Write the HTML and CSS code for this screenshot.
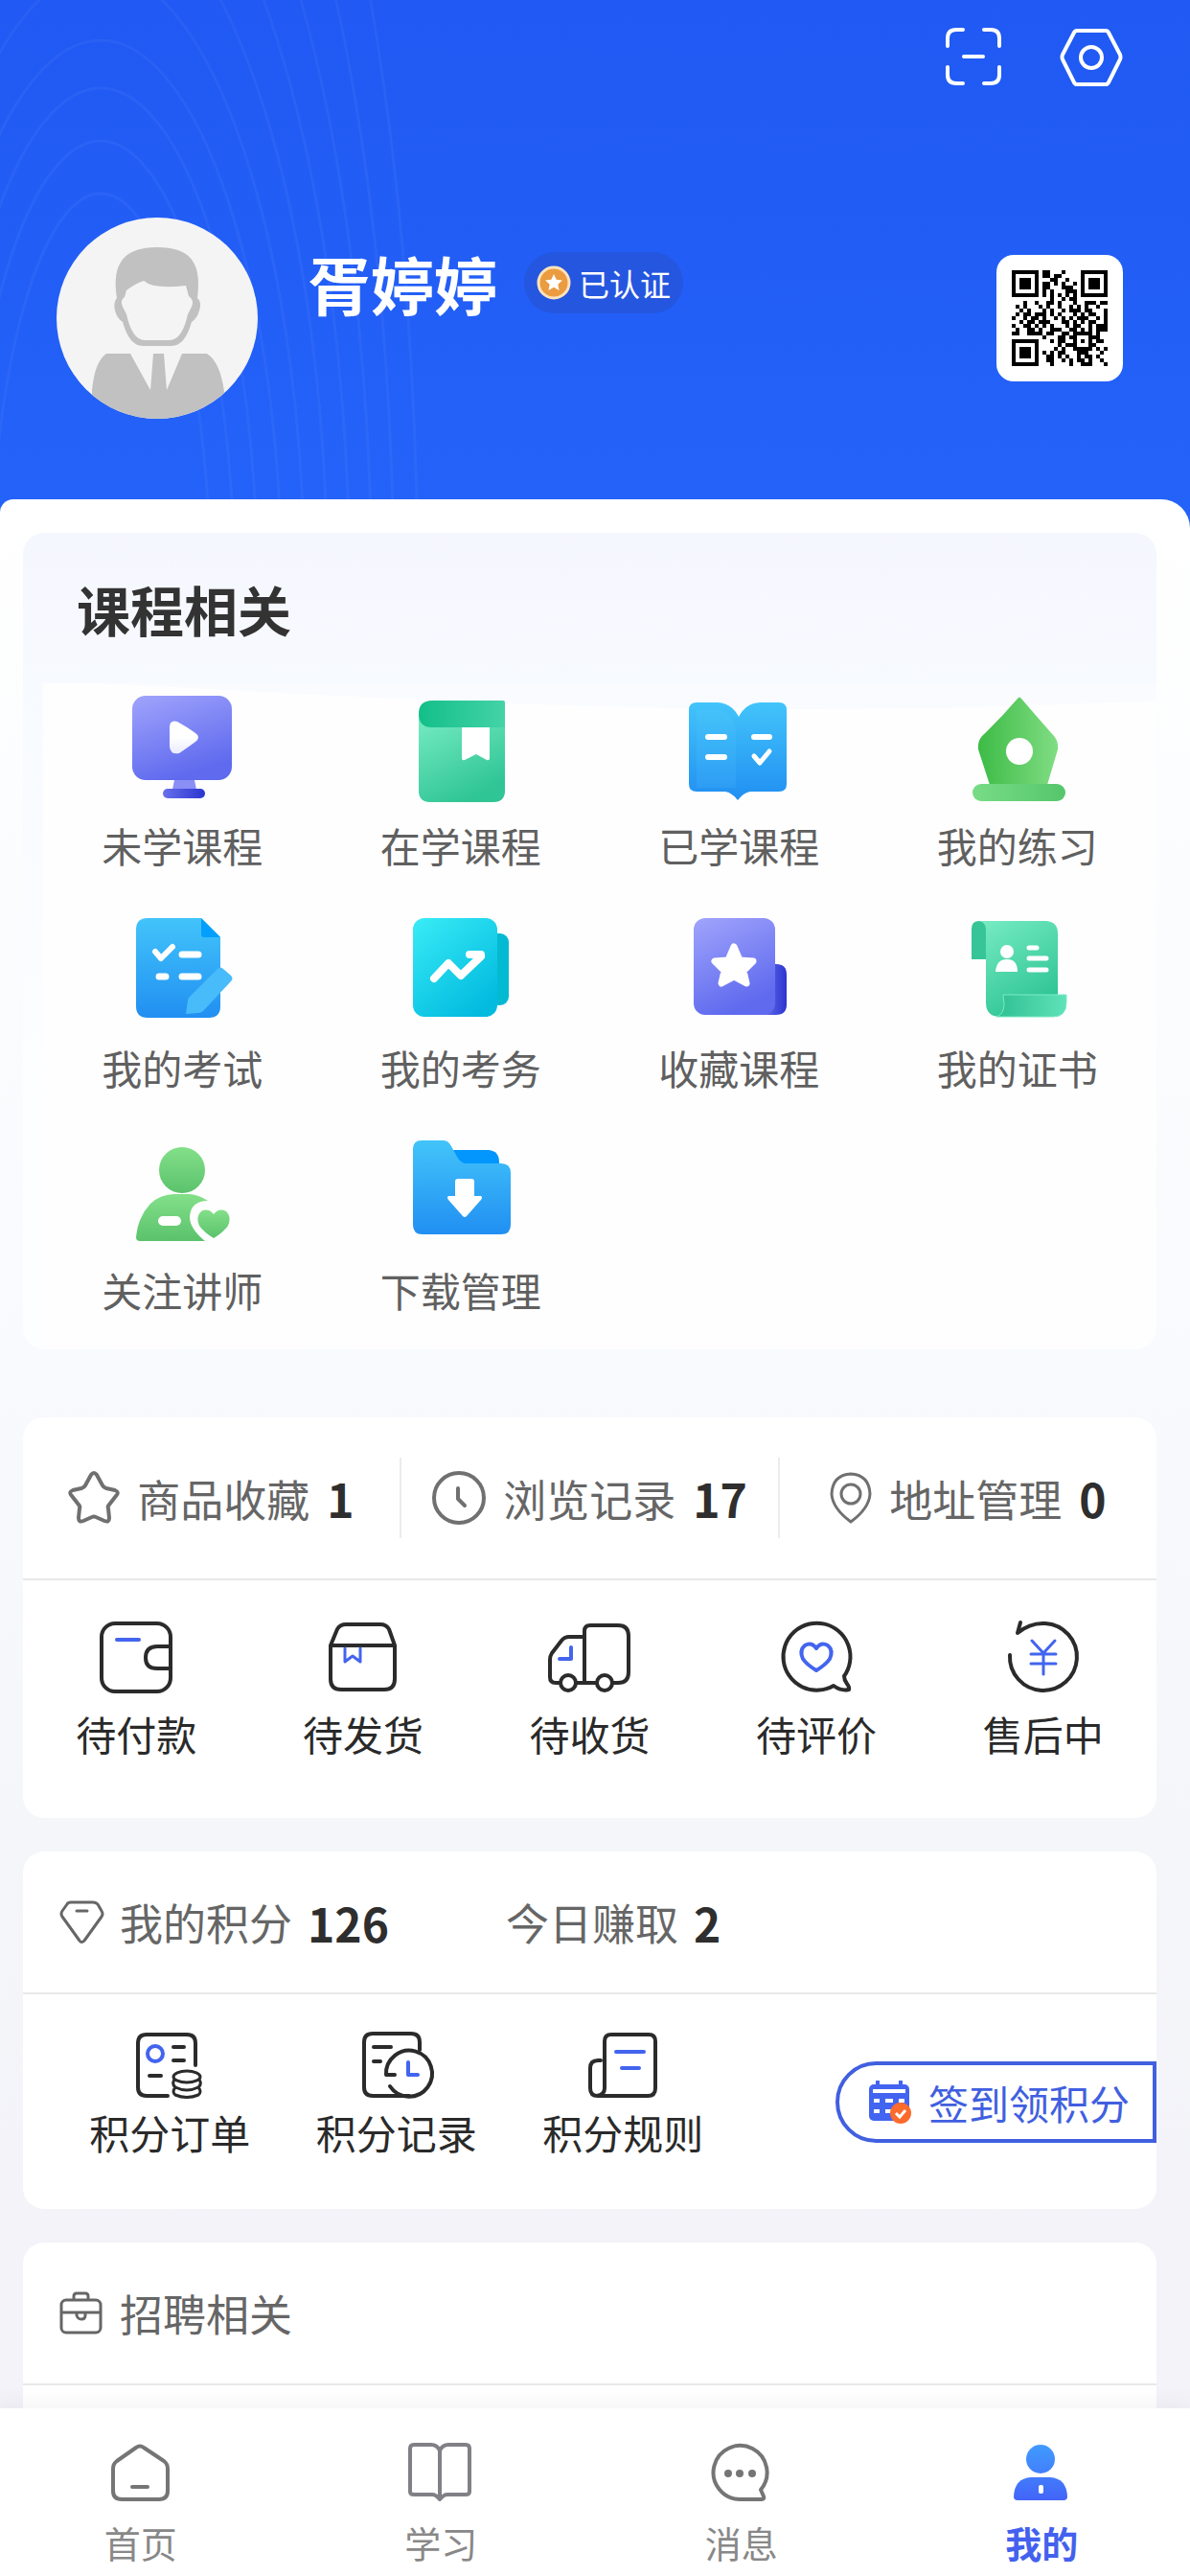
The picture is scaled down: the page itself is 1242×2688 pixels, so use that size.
FILE: index.html
```
<!DOCTYPE html>
<html lang="zh-CN">

<head>
    <meta charset="UTF-8">
    <meta name="viewport" content="width=device-width, initial-scale=1.0">
    <title>我的</title>
    <link rel="stylesheet" href="styles.css">
</head>

<body>

    <div class="page">
        <header class="header">
            <!-- faint rings behind the profile -->
            <svg class="rings" viewBox="0 0 600 551" fill="none" stroke="#fff" stroke-opacity=".045" stroke-width="3">
                <ellipse cx="105" cy="620" rx="115" ry="418" />
                <ellipse cx="105" cy="620" rx="140" ry="473" />
                <ellipse cx="105" cy="620" rx="164" ry="528" />
                <ellipse cx="105" cy="620" rx="189" ry="578" />
                <ellipse cx="105" cy="620" rx="213" ry="650" />
                <ellipse cx="105" cy="620" rx="237" ry="730" />
                <ellipse cx="105" cy="620" rx="260" ry="820" />
                <ellipse cx="105" cy="620" rx="283" ry="920" />
                <ellipse cx="105" cy="620" rx="306" ry="1040" />
                <ellipse cx="105" cy="620" rx="331" ry="1180" />
            </svg>

            <div class="tools">
                <button class="tool" type="button" aria-label="扫一扫">
                    <svg width="60" height="62" viewBox="0 0 60 62" fill="none" stroke="#fff" stroke-width="4" stroke-linecap="round">
                        <path d="M3 20V12Q3 3 12 3H19M41 3H48Q57 3 57 12V20M57 42V50Q57 59 48 59H41M19 59H12Q3 59 3 50V42M20 31H40" />
                    </svg>
                </button>
                <button class="tool" type="button" aria-label="设置">
                    <svg width="66" height="62" viewBox="0 0 66 62" fill="none" stroke="#fff" stroke-width="4" stroke-linejoin="round">
                        <path d="M18 4H48Q50 4 51 6L63 29Q64 32 63 34L51 58Q50 60 48 60H18Q16 60 15 58L3 34Q2 32 3 29L15 6Q16 4 18 4Z" />
                        <circle cx="33" cy="32" r="11" />
                    </svg>
                </button>
            </div>

            <div class="profile">
                <svg class="avatar" viewBox="0 0 210 210">
                    <defs><clipPath id="face"><circle cx="105" cy="105" r="105" /></clipPath></defs>
                    <g clip-path="url(#face)">
                        <rect width="210" height="210" fill="#f4f4f4" />
                        <path d="M63 84C57 46 72 31 105 31C139 31 152 46 147 84Q152 88 149 97Q147 105 141 109Q134 134 120 134H90Q76 134 69 109Q63 105 61 97Q59 88 63 84Z" fill="#c1c1c1" />
                        <path d="M73 76Q82 69 91 66Q101 75 135 71L138 82Q144 86 141 93L137 101Q131 128 118 128H92Q79 128 73 101L69 93Q66 86 71 83Z" fill="#f4f4f4" />
                        <path d="M37 210V180Q40 150 52 142H77L98 180L101 142H112L115 180L131 142H157Q171 151 175 182V210Z" fill="#c1c1c1" />
                    </g>
                </svg>
                <div class="who">
                    <h1 class="name">胥婷婷</h1>
                    <span class="badge">
                        <svg width="36" height="36" viewBox="0 0 36 36">
                            <circle cx="18" cy="18" r="16" fill="#eb9b40" stroke="#fde3bb" stroke-width="3" />
                            <path d="M18 9L20.700 14.800L27 15.500L22.300 19.800L23.600 26L18 22.800L12.400 26L13.700 19.800L9 15.500L15.300 14.800Z" fill="#fff" />
                        </svg>
                        已认证
                    </span>
                </div>
                <button class="qr" type="button" aria-label="二维码">
                    <svg width="100" height="100" viewBox="0 0 25 25" fill="none" stroke="#000">
                        <path d="M.5 .5H6.500V6.500H.5ZM18.500 .5H24.500V6.500H18.500ZM.5 18.500H6.500V24.500H.5Z" />
                        <path d="M2 3.500H5M20 3.500H23M2 21.500H5" stroke-width="3" />
                        <path d="M8 .5h2M13 .5h1M8 1.500h2M11 1.500h2M10 2.500h2M14 2.500h1M8 3.500h2M11 3.500h1M13 3.500h1M16 3.500h1M8 4.500h2M13 4.500h3M8 5.500h1M10 5.500h1M14 5.500h3M8 6.500h1M10 6.500h1M12 6.500h1M14 6.500h1M16 6.500h1M10 7.500h1M13 7.500h1M15 7.500h2" />
                        <path d="M3 8.500h1M6 8.500h1M9 8.500h2M12 8.500h1M16 8.500h1M19 8.500h3M23 8.500h2M1 9.500h1M3 9.500h1M7 9.500h1M9 9.500h1M12 9.500h1M15 9.500h1M17 9.500h1M19 9.500h1M22 9.500h1M2 10.500h1M4 10.500h1M8 10.500h1M10 10.500h1M13 10.500h1M15 10.500h3M19 10.500h2M24 10.500h1M1 11.500h1M3 11.500h2M6 11.500h3M10 11.500h1M12 11.500h1M16 11.500h1M18 11.500h1M20 11.500h2M24 11.500h1" />
                        <path d="M0 12.500h1M3 12.500h1M5 12.500h2M8 12.500h1M11 12.500h1M13 12.500h1M15 12.500h1M17 12.500h3M22 12.500h1M24 12.500h1M2 13.500h1M4 13.500h2M7 13.500h3M13 13.500h2M16 13.500h1M18 13.500h1M20 13.500h2M24 13.500h1M0 14.500h1M3 14.500h2M6 14.500h1M8 14.500h1M10 14.500h1M14 14.500h1M16 14.500h2M20 14.500h1M22 14.500h3M1 15.500h1M4 15.500h2M7 15.500h1M10 15.500h3M15 15.500h2M18 15.500h1M20 15.500h1M22 15.500h3M0 16.500h2M4 16.500h4M9 16.500h2M13 16.500h2M16 16.500h5M22 16.500h1" />
                        <path d="M8 17.500h1M12 17.500h2M15 17.500h2M20 17.500h3M10 18.500h1M12 18.500h2M16 18.500h1M18 18.500h1M20 18.500h1M22 18.500h2M12 19.500h1M14 19.500h3M20 19.500h2M11 20.500h1M13 20.500h1M16 20.500h5M22 20.500h1M24 20.500h1M8 21.500h1M10 21.500h1M12 21.500h2M17 21.500h3M23 21.500h1M9 22.500h2M12 22.500h1M14 22.500h1M17 22.500h1M19 22.500h2M22 22.500h1M9 23.500h2M13 23.500h1M15 23.500h1M17 23.500h2M20 23.500h1M23 23.500h1M10 24.500h1M15 24.500h1M18 24.500h3M24 24.500h1" />
                    </svg>
                </button>
            </div>
        </header>

        <main class="sheet">

            <section class="card courses">
                <h2 class="card-title">课程相关</h2>
                <div class="grid">
                    <svg class="curve" viewBox="0 0 1162 28" preserveAspectRatio="none">
                        <path d="M0 0H60C300 12 520 27 800 27C960 27 1060 22 1162 18V0Z" fill="#f9fbff" />
                    </svg>
                    <a class="course" href="#">
                        <svg class="course-icon" viewBox="0 0 120 120">
                            <defs>
                                <linearGradient id="violet" x1="0" y1="0" x2=".4" y2="1"><stop offset="0" stop-color="#a0a4fc" /><stop offset="1" stop-color="#5f6aee" /></linearGradient>
                                <linearGradient id="indigo"><stop offset="0" stop-color="#6870ec" /><stop offset="1" stop-color="#2b35cf" /></linearGradient>
                                <linearGradient id="shine" x1="0" y1="0" x2="0" y2="1"><stop offset=".5" stop-color="#fff" /><stop offset="1" stop-color="#e9ebff" /></linearGradient>
                                <linearGradient id="mint" x1="0" y1="0" x2=".5" y2="1"><stop offset="0" stop-color="#78ecc4" /><stop offset="1" stop-color="#30c595" /></linearGradient>
                                <linearGradient id="mintdark"><stop offset="0" stop-color="#13bf88" /><stop offset="1" stop-color="#44d3a6" /></linearGradient>
                                <linearGradient id="flap"><stop offset="0" stop-color="#2fc092" /><stop offset="1" stop-color="#5fe2b8" /></linearGradient>
                                <linearGradient id="sky" x1="0" y1="0" x2="0" y2="1"><stop offset="0" stop-color="#42c4fa" /><stop offset="1" stop-color="#218ff2" /></linearGradient>
                                <linearGradient id="leaf"><stop offset="0" stop-color="#3dbb46" /><stop offset="1" stop-color="#80dd83" /></linearGradient>
                                <linearGradient id="leafbar"><stop offset="0" stop-color="#78dc86" /><stop offset="1" stop-color="#55c66c" /></linearGradient>
                                <linearGradient id="leafdown" x1="0" y1="0" x2="0" y2="1"><stop offset="0" stop-color="#83e089" /><stop offset="1" stop-color="#5bc26c" /></linearGradient>
                                <linearGradient id="cyan" x1="0" y1="0" x2=".7" y2="1"><stop offset="0" stop-color="#39ecf6" /><stop offset="1" stop-color="#02bbdf" /></linearGradient>
                            </defs>
                            <rect x="8" y="4" width="104" height="88" rx="14" fill="url(#violet)" />
                            <path d="M52 92H73L75 102H50Z" fill="#8a8ff5" />
                            <rect x="40" y="101" width="44" height="10" rx="5" fill="url(#indigo)" />
                            <path d="M47 37Q47 29 55 31Q66 37 74 43Q80 47 74 52Q66 58 57 64Q48 66 47 57Z" fill="url(#shine)" />
                        </svg>
                        <span>未学课程</span>
                    </a>
                    <a class="course" href="#">
                        <svg class="course-icon" viewBox="0 0 120 120">
                            <path d="M16 24H106V103Q106 115 94 115H28Q16 115 16 103Z" fill="url(#mint)" />
                            <path d="M30 9H104Q106 9 106 11V37H30Q16 37 16 23Q16 9 30 9Z" fill="url(#mintdark)" />
                            <path d="M61 37H90V69Q90 72 87 71L76 65L64 71Q61 72 61 69Z" fill="#fff" />
                        </svg>
                        <span>在学课程</span>
                    </a>
                    <a class="course" href="#">
                        <svg class="course-icon" viewBox="0 0 120 120">
                            <path d="M16 11H38Q53 12 60 26Q67 12 82 11H102Q110 11 110 19V96Q110 104 102 104H72Q65 105 59 113Q53 105 46 104H16Q8 104 8 96V19Q8 11 16 11Z" fill="url(#sky)" />
                            <path d="M16 19H38Q56 21 57 43V100H16Z" fill="#6fd3ff" opacity=".12" />
                            <path d="M28 47H45M28 68H45M76 47H92" stroke="#fff" stroke-width="6" stroke-linecap="round" />
                            <path d="M76 67L82 74L92 62" fill="none" stroke="#fff" stroke-width="5" stroke-linecap="round" stroke-linejoin="round" />
                        </svg>
                        <span>已学课程</span>
                    </a>
                    <a class="course" href="#">
                        <svg class="course-icon" viewBox="0 0 120 120">
                            <path d="M60 7Q62 4 64 7Q82 28 98 46Q103 52 102 60L91 97H31L19 60Q18 52 23 46Q42 28 60 7Z" fill="url(#leaf)" />
                            <rect x="13" y="96" width="97" height="18" rx="9" fill="url(#leafbar)" />
                            <circle cx="62" cy="62" r="14" fill="#fff" />
                        </svg>
                        <span>我的练习</span>
                    </a>

                    <a class="course" href="#">
                        <svg class="course-icon" viewBox="0 0 120 120">
                            <path d="M24 4H80L100 24V96Q100 108 88 108H24Q12 108 12 96V16Q12 4 24 4Z" fill="url(#sky)" />
                            <path d="M80 4L100 24H83Q80 24 80 21Z" fill="#049ffc" />
                            <path d="M60 42H77M60 65H77M36 65H43" stroke="#fff" stroke-width="7" stroke-linecap="round" />
                            <path d="M32 39L38 46L50 34" fill="none" stroke="#fff" stroke-width="6" stroke-linecap="round" stroke-linejoin="round" />
                            <path d="M97 57Q100 54 103 57L111 64Q114 67 111 70L82 101Q80 103 77 103L64 104L66 90Q66 88 68 86Z" fill="#48bbfb" />
                        </svg>
                        <span>我的考试</span>
                    </a>
                    <a class="course" href="#">
                        <svg class="course-icon" viewBox="0 0 120 120">
                            <rect x="70" y="20" width="40" height="75" rx="9" fill="#04b9d2" />
                            <rect x="10" y="4" width="88" height="103" rx="12" fill="url(#cyan)" />
                            <path d="M32 67L47 51L60 64L81 44M69 42H81" fill="none" stroke="#fff" stroke-width="8" stroke-linecap="round" stroke-linejoin="round" />
                        </svg>
                        <span>我的考务</span>
                    </a>
                    <a class="course" href="#">
                        <svg class="course-icon" viewBox="0 0 120 120">
                            <path d="M85 52H99Q110 52 110 63V94Q110 105 99 105H85Z" fill="url(#indigo)" />
                            <rect x="13" y="4" width="85" height="101" rx="12" fill="url(#violet)" />
                            <path d="M55 34L61 48L75 49L65 59L68 72L55 65L42 72L45 59L35 49L49 48Z" fill="#fff" stroke="#fff" stroke-width="7" stroke-linejoin="round" />
                        </svg>
                        <span>收藏课程</span>
                    </a>
                    <a class="course" href="#">
                        <svg class="course-icon" viewBox="0 0 120 120">
                            <path d="M12 47V15Q12 7 20 7Q28 7 28 16V47Z" fill="#37c598" />
                            <path d="M20 7H90Q102 8 102 20V107H42Q27 107 27 92V15Q26 8 20 7Z" fill="url(#mint)" />
                            <path d="M45 84H111V92Q111 107 97 107H38Q46 104 46 94Z" fill="url(#flap)" stroke="#7deac6" />
                            <circle cx="49" cy="39" r="7" fill="#fff" />
                            <path d="M37 60Q38 47 49 47Q60 47 60 60Z" fill="#fff" />
                            <path d="M72 35H80M72 46H90M72 58H90" stroke="#fff" stroke-width="5" stroke-linecap="round" />
                        </svg>
                        <span>我的证书</span>
                    </a>

                    <a class="course" href="#">
                        <svg class="course-icon" viewBox="0 0 120 120">
                            <circle cx="60" cy="35" r="24" fill="url(#leafdown)" />
                            <path d="M12 105Q14 84 27 70Q38 60 52 60H68Q78 61 87 67Q69 67 68 84Q68 96 84 109H16Q12 109 12 105Z" fill="url(#leafdown)" />
                            <rect x="35" y="83" width="24" height="10" rx="5" fill="#fff" />
                            <path d="M93 81Q99 74 106 78Q112 84 108 93Q103 100 93 106Q83 100 78 93Q74 84 80 78Q87 74 93 81Z" fill="url(#leafdown)" />
                        </svg>
                        <span>关注讲师</span>
                    </a>
                    <a class="course" href="#">
                        <svg class="course-icon" viewBox="0 0 120 120">
                            <path d="M48 14H89Q100 15 100 27V40H48Z" fill="#0396fd" />
                            <path d="M19 4H42Q47 4 50 10L56 21Q60 28 65 28H102Q112 28 112 38V92Q112 102 102 102H20Q10 102 10 92V13Q10 4 19 4Z" fill="url(#sky)" />
                            <path d="M57 44H71Q74 44 74 47V62H81Q83 63 81 66L66 83Q64 85 62 83L47 66Q45 63 47 62H54V47Q54 44 57 44Z" fill="#fff" />
                        </svg>
                        <span>下载管理</span>
                    </a>
                </div>
            </section>

            <section class="card orders">
                <div class="stats">
                    <a class="stat" href="#">
                        <svg width="54" height="56" viewBox="0 0 54 56" fill="none" stroke="#707070" stroke-width="4" stroke-linejoin="round">
                            <path d="M24 4Q27 0 30 4L36 15Q37 17 40 18L49 20Q54 22 50 26L43 35Q41 37 42 39L43 49Q43 54 38 52L29 48Q27 47 25 48L16 52Q11 54 11 49L12 39Q13 37 11 35L4 26Q0 22 5 20L14 18Q17 17 18 15Z" />
                        </svg>
                        商品收藏
                        <b>1</b>
                    </a>
                    <a class="stat" href="#">
                        <svg width="56" height="56" viewBox="0 0 56 56" fill="none" stroke="#707070" stroke-width="4" stroke-linecap="round" stroke-linejoin="round">
                            <circle cx="28" cy="28" r="26" />
                            <path d="M27 18V29L34 36" />
                        </svg>
                        浏览记录
                        <b>17</b>
                    </a>
                    <a class="stat" href="#">
                        <svg width="44" height="54" viewBox="0 0 44 54" fill="none" stroke="#707070" stroke-width="3" stroke-linejoin="round">
                            <path d="M22 52Q3 38 2 23Q3 3 22 2Q41 3 42 23Q41 38 22 52Z" />
                            <circle cx="22" cy="23" r="10" />
                        </svg>
                        地址管理
                        <b>0</b>
                    </a>
                </div>
                <div class="entries">
                    <a class="entry" href="#">
                        <svg class="line-icon" viewBox="0 0 88 80">
                            <rect x="8" y="4" width="72" height="71" rx="14" />
                            <path d="M80 28H66Q54 28 54 40Q54 51 66 51H80" />
                            <path class="blue" d="M24 21H47" />
                        </svg>
                        <span>待付款</span>
                    </a>
                    <a class="entry" href="#">
                        <svg class="line-icon" viewBox="0 0 88 80">
                            <path d="M10 27L17 10Q20 5 26 5H62Q68 5 71 10L77 27V62Q77 73 66 73H21Q10 73 10 62ZM10 27H77" />
                            <path class="blue thin" d="M25 30V44L33 38L41 44V30" />
                        </svg>
                        <span>待发货</span>
                    </a>
                    <a class="entry" href="#">
                        <svg class="line-icon" viewBox="0 0 88 80">
                            <path d="M39 66V12Q39 6 45 6H74Q85 6 85 17V55Q85 66 74 66H68M52 66H30M14 66H9Q3 66 3 60V42Q3 38 5 35L15 22Q18 18 23 18H38" />
                            <circle cx="22" cy="66" r="8" />
                            <circle cx="60" cy="66" r="8" />
                            <path class="blue" d="M25 29V41H13" />
                        </svg>
                        <span>待收货</span>
                    </a>
                    <a class="entry" href="#">
                        <svg class="line-icon" viewBox="0 0 88 80">
                            <path d="M73 59A35 35 0 1 0 62 69Q70 75 78 73Q79 71 76 67Q73 63 73 59Z" />
                            <path class="blue" d="M44 30Q49 23 56 27Q62 32 58 41Q54 47 44 53Q34 47 30 41Q26 32 32 27Q39 23 44 30Z" />
                        </svg>
                        <span>待评价</span>
                    </a>
                    <a class="entry" href="#">
                        <svg class="line-icon" viewBox="0 0 88 80">
                            <path d="M20 3L17 14Q30 3 46 4A35 35 0 1 1 9 37" />
                            <path class="blue thin" d="M32 22L44 35L56 22M31 36H57M31 46H57M44 35V57" />
                        </svg>
                        <span>售后中</span>
                    </a>
                </div>
            </section>

            <section class="card points">
                <div class="card-head">
                    <svg width="47" height="46" viewBox="0 0 47 46" fill="none" stroke="#666" stroke-width="3" stroke-linecap="round" stroke-linejoin="round">
                        <path d="M12 2H35Q38 2 40 4L44 11Q46 14 44 17L26 42Q23 45 21 42L3 17Q1 14 3 11L8 4Q9 2 12 2ZM18 11H29" />
                    </svg>
                    <span>我的积分</span>
                    <b>126</b>
                    <span class="today">今日赚取</span>
                    <b>2</b>
                </div>
                <div class="points-body">
                    <a class="entry" href="#">
                        <svg class="line-icon short" viewBox="0 0 88 72">
                            <path d="M71 37V14Q71 5 62 5H20Q11 5 11 14V60Q11 69 20 69H42M48 18H59M48 32H59M23 48H35" />
                            <circle class="blue" cx="29" cy="25" r="8" />
                            <g class="thin">
                                <ellipse cx="62" cy="49" rx="14" ry="6" />
                                <path d="M49 52Q46 57 50 60Q62 66 74 60Q78 57 75 52M50 60Q46 65 50 68Q62 73 74 68Q78 65 74 60" />
                            </g>
                        </svg>
                        <span>积分订单</span>
                    </a>
                    <a class="entry" href="#">
                        <svg class="line-icon short" viewBox="0 0 88 72">
                            <path d="M68 21V13Q68 4 59 4H19Q10 4 10 13V60Q10 69 19 69H57M20 18H38M20 33H27" />
                            <path d="M42 47H33A24 24 0 1 1 37 59" />
                            <path class="blue" d="M56 34V47H66" />
                        </svg>
                        <span>积分记录</span>
                    </a>
                    <a class="entry" href="#">
                        <svg class="line-icon short" viewBox="0 0 88 72">
                            <path d="M25 61V12Q25 5 32 5H71Q78 5 78 12V61Q78 69 70 69H17Q25 68 25 61M21 32H18Q10 32 10 40V61Q10 69 18 69" />
                            <path class="blue" d="M37 23H66M43 40H61" />
                        </svg>
                        <span>积分规则</span>
                    </a>
                    <button class="sign" type="button">
                        <svg width="46" height="46" viewBox="0 0 46 46">
                            <path d="M10 1V6M34 1V6" stroke="#4364f0" stroke-width="4" stroke-linecap="round" />
                            <rect x="1" y="4" width="42" height="38" rx="5" fill="#4364f0" />
                            <path d="M5 11H39M6 21H12M18 21H26M32 21H38M6 32H12M18 32H26" stroke="#fff" stroke-width="4" />
                            <circle cx="34" cy="34" r="11" fill="#fb6b2d" />
                            <path d="M29 34L33 38L39 31" fill="none" stroke="#fff" stroke-width="3" />
                        </svg>
                        签到领积分
                    </button>
                </div>
            </section>

            <section class="card jobs">
                <div class="card-head">
                    <svg width="47" height="46" viewBox="0 0 47 46" fill="none" stroke="#666" stroke-width="3" stroke-linejoin="round">
                        <rect x="2" y="9" width="41" height="34" rx="5" />
                        <path d="M15 8V5Q15 2 18 2H27Q30 2 30 5V8M2 22H43M18 22V25Q19 29 23 29Q27 29 27 25V22" />
                    </svg>
                    <span>招聘相关</span>
                </div>
                <div class="jobs-body"></div>
            </section>

        </main>
    </div>

    <nav class="tabbar">
        <a class="tab" href="#">
            <svg width="68" height="64" viewBox="0 0 68 64" fill="none" stroke="#757575" stroke-width="4" stroke-linecap="round" stroke-linejoin="round">
                <path d="M29 6Q33 3 37 6L58 20Q62 23 62 28V51Q62 60 53 60H14Q5 60 5 51V28Q5 23 9 20ZM25 47H41" />
            </svg>
            <span>首页</span>
        </a>
        <a class="tab" href="#">
            <svg width="68" height="64" viewBox="0 0 68 64" fill="none" stroke="#808086" stroke-width="4" stroke-linejoin="round">
                <path d="M33 9Q30 3 24 3H6Q2 3 2 7V52Q2 55 6 55H25Q29 55 33 60Q37 55 41 55H60Q64 55 64 52V7Q64 3 60 3H42Q36 3 33 9V59" />
            </svg>
            <span>学习</span>
        </a>
        <a class="tab" href="#">
            <svg width="68" height="64" viewBox="0 0 68 64" fill="none" stroke="#757575" stroke-width="4" stroke-linejoin="round">
                <path d="M54 50A28 28 0 1 0 32 60H55Q58 60 57 57Z" />
                <g fill="#757575" stroke="none"><circle cx="20" cy="33" r="4" /><circle cx="32" cy="33" r="4" /><circle cx="45" cy="33" r="4" /></g>
            </svg>
            <span>消息</span>
        </a>
        <a class="tab active" href="#">
            <svg width="68" height="64" viewBox="0 0 68 64">
                <defs><linearGradient id="me" x1="0" y1="0" x2="0" y2="64" gradientUnits="userSpaceOnUse"><stop offset="0" stop-color="#409eff" /><stop offset="1" stop-color="#4361f8" /></linearGradient></defs>
                <circle cx="33" cy="18" r="15" fill="url(#me)" />
                <path d="M23 37H43Q60 38 61 57Q61 61 57 61H9Q5 61 5 57Q6 38 23 37Z" fill="url(#me)" />
                <rect x="31" y="45" width="5" height="9" rx="2" fill="#fff" />
            </svg>
            <span>我的</span>
        </a>
    </nav>

</body>

</html>
```
FILE: styles.css
```
* {
    margin: 0;
    padding: 0;
    box-sizing: border-box;
}

body {
    height: 100vh;
    display: flex;
    flex-direction: column;
    overflow: hidden;
    background-color: #f3f3f9;
    font-family: "Noto Sans CJK SC", "Noto Sans", sans-serif;
    color: #333;
}

a {
    color: inherit;
    text-decoration: none;
}

button {
    font-family: inherit;
    border: none;
    background: none;
}

svg {
    display: block;
    flex-shrink: 0;
}

.page {
    flex: 1;
    min-height: 0;
    overflow: hidden;
}

/* header */

.header {
    position: relative;
    padding: 28px 70px 114px 59px;
    background: linear-gradient(#2059f3, #2463f9);
}

.rings {
    position: absolute;
    left: 0;
    top: 0;
    width: 600px;
    height: 551px;
}

.tools {
    display: flex;
    justify-content: flex-end;
    gap: 60px;
    height: 62px;
    margin-bottom: 137px;
}

.profile {
    position: relative;
    display: flex;
    align-items: center;
}

.avatar {
    width: 210px;
    height: 210px;
}

.who {
    flex: 1;
    align-self: flex-start;
    display: flex;
    align-items: center;
    margin: 28px 0 0 52px;
}

.name {
    font-size: 66px;
    line-height: 80px;
    color: #fff;
}

.badge {
    display: flex;
    align-items: center;
    gap: 8px;
    height: 64px;
    margin-left: 28px;
    padding: 0 13px;
    border-radius: 32px;
    background-color: #2556df;
    color: #fff;
    font-size: 32px;
}

.qr {
    width: 132px;
    height: 132px;
    padding: 16px;
    border-radius: 18px;
    background-color: #fff;
}

/* white sheet with the cards */

.sheet {
    position: relative;
    margin-top: -30px;
    padding: 35px 35px 0 24px;
    border-radius: 14px 30px 0 0;
    background: linear-gradient(#fff, #fcfdfe 300px, #f8fafd 900px, #f5f6fa 1400px, #f3f3f9 1800px);
}

.card {
    margin-bottom: 35px;
    border-radius: 22px;
    background-color: #fff;
    overflow: hidden;
}

.courses {
    margin-bottom: 71px;
    background: linear-gradient(#f5f7fe, #f7faff 160px, #fdfeff 600px);
}

.card-title {
    padding-left: 56px;
    font-size: 56px;
    line-height: 157px;
}

.grid {
    position: relative;
    display: grid;
    grid-template-columns: repeat(4, 1fr);
    row-gap: 33px;
    margin-left: 21px;
    padding-bottom: 32px;
    background-color: #fefefe;
}

.curve {
    position: absolute;
    left: 0;
    top: 0;
    width: 100%;
    height: 28px;
}

.course {
    position: relative;
    display: flex;
    flex-direction: column;
    align-items: center;
    gap: 10px;
    padding-top: 9px;
    font-size: 42px;
    line-height: 60px;
    color: #606060;
}

.course-icon {
    width: 120px;
    height: 120px;
}

/* orders */

.stats {
    display: flex;
    align-items: center;
    height: 170px;
    border-bottom: 2px solid #e9e9e9;
}

.stat {
    flex: 1;
    display: flex;
    align-items: center;
    justify-content: center;
    gap: 18px;
    height: 84px;
    font-size: 45px;
    color: #666;
}

.stat + .stat {
    border-left: 2px solid #ececec;
}

b {
    font-size: 48px;
    color: #2e2e2e;
}

.entries {
    display: flex;
    padding: 41px 0 58px;
}

.entry {
    flex: 1;
    display: flex;
    flex-direction: column;
    align-items: center;
    gap: 9px;
    font-size: 42px;
    line-height: 60px;
    color: #2a2a2a;
}

.line-icon {
    width: 88px;
    height: 80px;
    fill: none;
    stroke: #2b2b2b;
    stroke-width: 4;
    stroke-linecap: round;
    stroke-linejoin: round;
}

.line-icon.short {
    height: 72px;
}

.blue {
    stroke: #4364ee;
}

.thin {
    stroke-width: 3;
}

/* points */

.card-head {
    display: flex;
    align-items: center;
    gap: 16px;
    height: 149px;
    padding-left: 38px;
    border-bottom: 2px solid #e9e9e9;
    font-size: 45px;
    color: #666;
}

.today {
    margin-left: 106px;
}

.points-body {
    display: flex;
    align-items: flex-start;
    padding: 37px 0 50px 35px;
}

.points-body .entry {
    flex: 0 0 20.6%;
    gap: 5px;
}

.sign {
    display: flex;
    align-items: center;
    gap: 17px;
    height: 85px;
    margin: 33px 0 0 auto;
    padding: 0 24px 0 30px;
    border: 4px solid #415fe0;
    border-radius: 43px 0 0 43px;
    font-size: 42px;
    color: #415fe0;
}

.jobs-body {
    height: 260px;
}

/* bottom tabs */

.tabbar {
    position: relative;
    display: flex;
    margin: 0 -2px 0 -10px;
    padding: 35px 0 10px;
    background-color: #fff;
    box-shadow: 0 -4px 24px rgba(0, 0, 0, .05);
}

.tab {
    flex: 1;
    display: flex;
    flex-direction: column;
    align-items: center;
    gap: 16px;
    font-size: 38px;
    line-height: 50px;
    color: #888;
}

.tab.active {
    font-weight: bold;
    color: #4361ee;
}
```
